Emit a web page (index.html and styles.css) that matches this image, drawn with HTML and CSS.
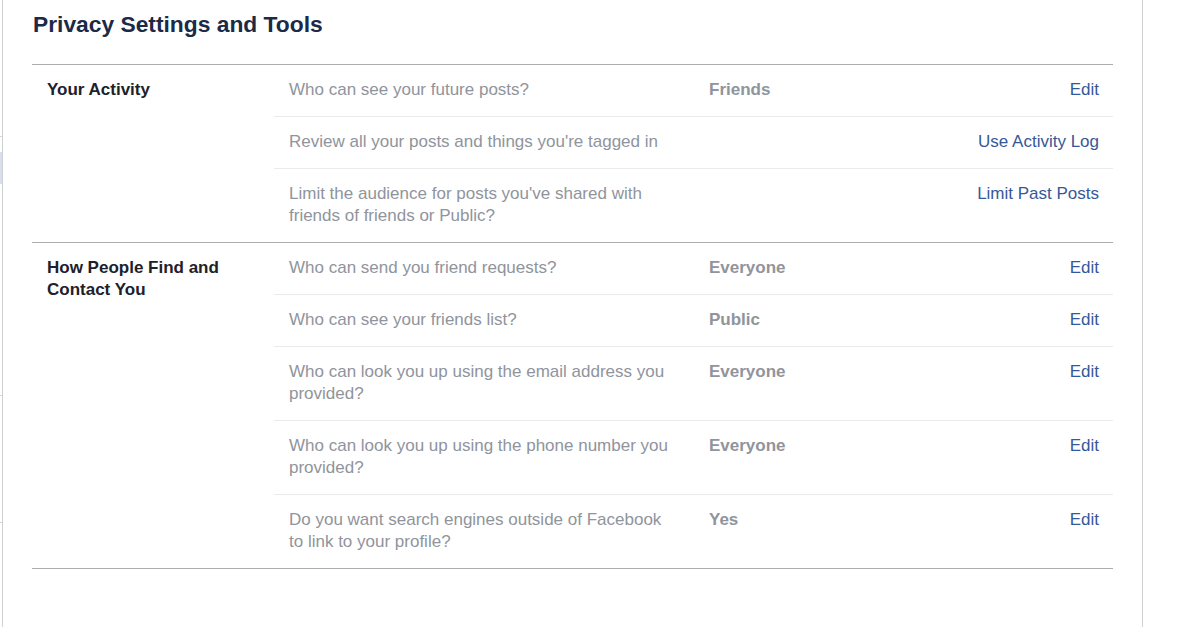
FILE: index.html
```html
<!DOCTYPE html>
<html lang="en">
<head>
<meta charset="utf-8">
<title>Privacy Settings and Tools</title>
<link rel="stylesheet" href="styles.css">
</head>
<body>
<div class="page">
  <div class="edge">
    <div class="tick tick-1"></div>
    <div class="hilite"></div>
    <div class="tick tick-2"></div>
    <div class="tick tick-3"></div>
  </div>
  <main class="main">
    <h1 class="title">Privacy Settings and Tools</h1>
    <div class="sections">
      <section class="section">
        <h2 class="label">Your Activity</h2>
        <div class="rows">
          <div class="row">
            <div class="q">Who can see your future posts?</div>
            <div class="val">Friends</div>
            <a class="act" href="#">Edit</a>
          </div>
          <div class="row">
            <div class="q">Review all your posts and things you're tagged in</div>
            <div class="val"></div>
            <a class="act" href="#">Use Activity Log</a>
          </div>
          <div class="row">
            <div class="q">Limit the audience for posts you've shared with friends of friends or Public?</div>
            <div class="val"></div>
            <a class="act" href="#">Limit Past Posts</a>
          </div>
        </div>
      </section>
      <section class="section">
        <h2 class="label">How People Find and Contact You</h2>
        <div class="rows">
          <div class="row">
            <div class="q">Who can send you friend requests?</div>
            <div class="val">Everyone</div>
            <a class="act" href="#">Edit</a>
          </div>
          <div class="row">
            <div class="q">Who can see your friends list?</div>
            <div class="val">Public</div>
            <a class="act" href="#">Edit</a>
          </div>
          <div class="row">
            <div class="q">Who can look you up using the email address you provided?</div>
            <div class="val">Everyone</div>
            <a class="act" href="#">Edit</a>
          </div>
          <div class="row">
            <div class="q">Who can look you up using the phone number you provided?</div>
            <div class="val">Everyone</div>
            <a class="act" href="#">Edit</a>
          </div>
          <div class="row">
            <div class="q">Do you want search engines outside of Facebook to link to your profile?</div>
            <div class="val">Yes</div>
            <a class="act" href="#">Edit</a>
          </div>
        </div>
      </section>
    </div>
  </main>
</div>
</body>
</html>
```

FILE: styles.css
```css
* { box-sizing: border-box; }
html, body { margin: 0; padding: 0; background: #fff; }
body {
  font-family: "Liberation Sans", Arial, Helvetica, sans-serif;
  font-size: 17px;
  line-height: 22px;
  color: #1d2129;
}
.page {
  display: flex;
  min-height: 627px;
}
.edge {
  width: 2px;
  flex: none;
  display: flex;
  flex-direction: column;
}
.tick { height: 1px; background: #d3d6db; }
.tick-1 { margin-top: 136px; }
.hilite { margin-top: 15px; height: 32px; background: #d8dfea; }
.tick-2 { margin-top: 211px; }
.tick-3 { margin-top: 126px; }
.main {
  width: 1141px;
  flex: none;
  border-left: 1px solid #cfd1d5;
  border-right: 1px solid #cfd1d5;
  padding: 10px 29px 0 29px;
}
.title {
  margin: 0 0 26px 1px;
  font-size: 22.8px;
  line-height: 28px;
  font-weight: bold;
  color: #1c2a47;
}
.sections { border-bottom: 1px solid #acadb0; }
.section {
  display: grid;
  grid-template-columns: 242px 1fr;
  border-top: 1px solid #acadb0;
}
.label {
  margin: 0;
  padding: 14px 15px 0 15px;
  font-size: 17px;
  line-height: 22px;
  font-weight: bold;
  color: #1d2129;
}
.row {
  display: grid;
  grid-template-columns: 420px 1fr auto;
  padding: 14px 0 15px;
  border-bottom: 1px solid #e9ebee;
}
.row:last-child { border-bottom: 0; }
.q {
  padding: 0 20px 0 15px;
  color: #90949c;
}
.val {
  padding: 0 15px;
  font-weight: bold;
  color: #90949c;
}
.act {
  padding-right: 14px;
  color: #365899;
  text-decoration: none;
  text-align: right;
}
```
